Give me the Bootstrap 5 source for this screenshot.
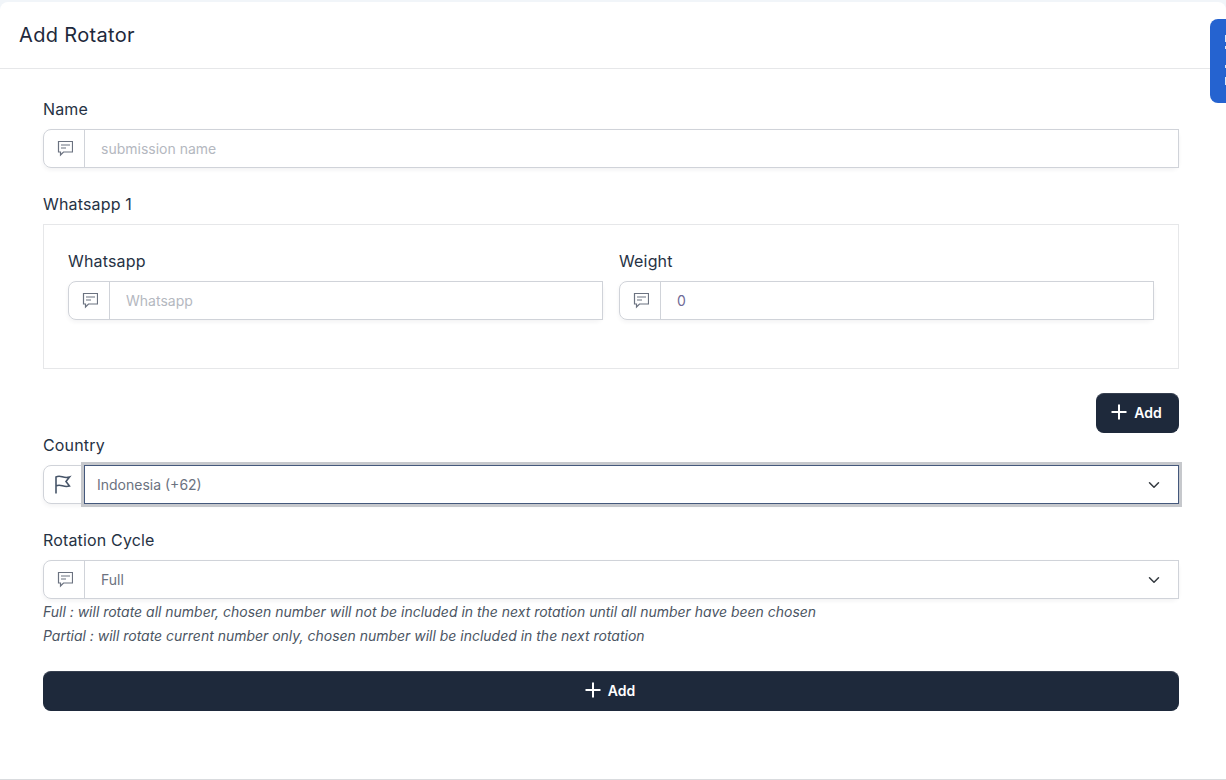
<!DOCTYPE html>
<html lang="en">
<head>
    <meta charset="UTF-8">
    <meta name="viewport" content="width=device-width, initial-scale=1.0">
    <title>Add Rotator</title>
    <link href="https://cdn.jsdelivr.net/npm/bootstrap@5.3.0/dist/css/bootstrap.min.css" rel="stylesheet">
    <style>
        body {
            background: #f1f5f9;
            font-family: Inter, "Liberation Sans", sans-serif;
            font-size: 14px;
            color: #1e293b;
            padding-top: 2px;
            height: 780px;
            overflow: hidden;
        }
        .page-card {
            height: 778px;
            border: 0;
            border-bottom: 1px solid #d9dbde;
            border-radius: 8px 8px 0 0;
        }
        .page-head {
            height: 67px;
            padding: 0 19px;
            border-bottom: 1px solid #e6e7e9;
        }
        .page-head h3 {
            font-size: 20px;
            font-weight: 400;
            letter-spacing: .33px;
            color: #1e293b;
            margin: 0;
        }
        .page-body {
            padding: 28px 47px 0 43px;
        }
        .field-label {
            font-size: 16px;
            font-weight: 400;
            letter-spacing: .16px;
            line-height: 24px;
            color: #263244;
            margin-bottom: 8px;
            display: block;
        }
        .rotator-group {
            height: 39px;
            box-shadow: 0 2px 4px rgba(30, 41, 59, .06);
            border-radius: 8px;
        }
        .rotator-group .input-group-text {
            width: 42px;
            padding: 0 0 1px;
            justify-content: center;
            background: #fff;
            border-color: #d0d3d9;
            border-radius: 8px 0 0 8px;
        }
        .rotator-group .form-control,
        .rotator-group .form-select {
            font-size: 14px;
            color: #6b7280;
            border-color: #d0d3d9;
            border-radius: 0;
            padding-left: 16px;
            box-shadow: none;
        }
        .rotator-group .form-select { background-position: right 16px center; }
        .rotator-group .form-control::placeholder { color: #b4b8c0; }
        .rotator-group .weight-input { color: #6f6a96; }
        .rotator-group .country-select {
            position: relative;
            z-index: 3;
            border-color: #44587c;
            padding-left: 12px;
            box-shadow: 0 0 0 3px #c6c8cc;
        }
        .whatsapp-box {
            height: 145px;
            padding: 24px;
            border: 1px solid #e6e7e9;
            margin-bottom: 24px;
        }
        .dark-btn {
            background: #1e293b;
            border: 1px solid #1e293b;
            border-top-color: #363f4f;
            color: #fff;
            font-size: 14px;
            font-weight: 600;
            height: 40px;
            border-radius: 8px;
            padding: 0 2px 1px 0;
            gap: 7px;
        }
        .dark-btn:hover { background: #1e293b; color: #fff; }
        .dark-btn svg { margin-bottom: 2px; }
        .add-small { width: 83px; }
        .help-text {
            font-size: 13.98px;
            font-style: italic;
            line-height: 24px;
            color: #4b5563;
        }
        .help-first { margin-top: 1px; }
        .help-last { margin-bottom: 23px; }
        .side-tab {
            position: absolute;
            top: 19px;
            right: 0;
            width: 16px;
            height: 84px;
            background: #2563d0;
            border-radius: 8px 0 0 8px;
            overflow: hidden;
        }
        .side-tab::after {
            content: "";
            position: absolute;
            top: 0;
            right: 0;
            bottom: 0;
            width: 1px;
            background: linear-gradient(to bottom,
                transparent 16px, #dfe8f8 16px, #dfe8f8 23px, transparent 23px,
                transparent 27px, #dfe8f8 27px, #dfe8f8 30px, transparent 30px,
                transparent 46px, #dfe8f8 46px, #dfe8f8 49px, transparent 49px,
                transparent 58px, #dfe8f8 58px, #dfe8f8 66px, transparent 66px);
        }
    </style>
</head>
<body>
    <div class="card page-card">
        <div class="page-head d-flex align-items-center">
            <h3>Add Rotator</h3>
        </div>
        <form class="page-body">
            <label class="field-label">Name</label>
            <div class="input-group rotator-group mb-4">
                <span class="input-group-text">
                    <svg width="18" height="18" viewBox="0 0 18 18" fill="none" stroke="#6b7280" stroke-width="1.2"><path d="M3.500 2.500h14v10.500H8.500L5.500 16v-3h-2z"/><path d="M6 6h9M6 9h5"/></svg>
                </span>
                <input type="text" class="form-control" placeholder="submission name">
            </div>

            <label class="field-label mt-3">Whatsapp 1</label>
            <div class="whatsapp-box">
                <div class="row g-3">
                    <div class="col-6">
                        <label class="field-label">Whatsapp</label>
                        <div class="input-group rotator-group">
                            <span class="input-group-text">
                                <svg width="18" height="18" viewBox="0 0 18 18" fill="none" stroke="#6b7280" stroke-width="1.2"><path d="M3.500 2.500h14v10.500H8.500L5.500 16v-3h-2z"/><path d="M6 6h9M6 9h5"/></svg>
                            </span>
                            <input type="text" class="form-control" placeholder="Whatsapp">
                        </div>
                    </div>
                    <div class="col-6">
                        <label class="field-label">Weight</label>
                        <div class="input-group rotator-group">
                            <span class="input-group-text">
                                <svg width="18" height="18" viewBox="0 0 18 18" fill="none" stroke="#6b7280" stroke-width="1.2"><path d="M3.500 2.500h14v10.500H8.500L5.500 16v-3h-2z"/><path d="M6 6h9M6 9h5"/></svg>
                            </span>
                            <input type="text" class="form-control weight-input" value="0">
                        </div>
                    </div>
                </div>
            </div>

            <div class="d-flex justify-content-end">
                <button type="button" class="btn dark-btn add-small d-flex align-items-center justify-content-center">
                    <svg width="16" height="16" viewBox="0 0 16 16" stroke="#fff" stroke-width="2"><path d="M8 .5v15M.5 8h15"/></svg>Add
                </button>
            </div>

            <label class="field-label">Country</label>
            <div class="input-group rotator-group mb-4">
                <span class="input-group-text">
                    <svg width="20" height="20" viewBox="0 0 20 20" fill="none" stroke="#475569" stroke-width="1.600"><path d="M2 19.500V3c5-2.500 7 2 13.500 0L12 7.500l3.500 4.500c-6 2-8.500-2.500-13.500 0"/></svg>
                </span>
                <select class="form-select country-select">
                    <option>Indonesia (+62)</option>
                </select>
            </div>

            <label class="field-label">Rotation Cycle</label>
            <div class="input-group rotator-group">
                <span class="input-group-text">
                    <svg width="18" height="18" viewBox="0 0 18 18" fill="none" stroke="#6b7280" stroke-width="1.2"><path d="M3.500 2.500h14v10.500H8.500L5.500 16v-3h-2z"/><path d="M6 6h9M6 9h5"/></svg>
                </span>
                <select class="form-select">
                    <option>Full</option>
                </select>
            </div>
            <div class="help-text help-first">Full : will rotate all number, chosen number will not be included in the next rotation until all number have been chosen</div>
            <div class="help-text help-last">Partial : will rotate current number only, chosen number will be included in the next rotation</div>

            <button type="button" class="btn dark-btn w-100 d-flex align-items-center justify-content-center">
                <svg width="16" height="16" viewBox="0 0 16 16" stroke="#fff" stroke-width="2"><path d="M8 .5v15M.5 8h15"/></svg>Add
            </button>
        </form>
    </div>
    <div class="side-tab"></div>
</body>
</html>
